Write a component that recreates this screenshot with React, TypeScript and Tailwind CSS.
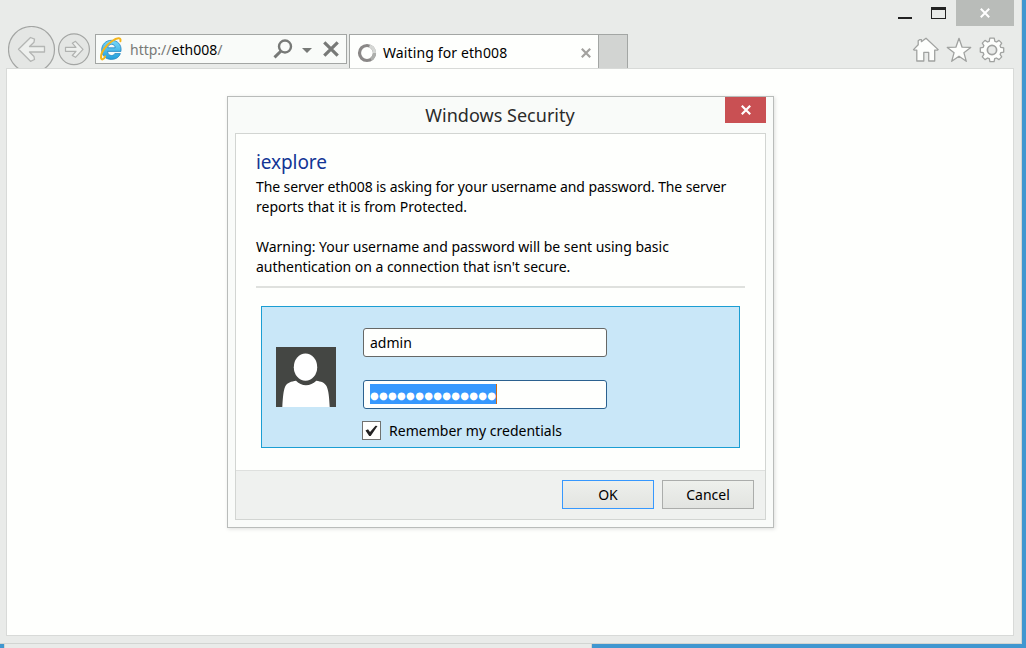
import React from 'react';

function BackIcon() {
  return (
    <svg width="48" height="42" viewBox="0 0 48 42" fill="none">
      <circle cx="23.5" cy="23.5" r="23" fill="#e4e6e4" stroke="#a3a5a3" strokeWidth="1.2" />
      <path d="M10.5 23.3 22.5 11.5 26.5 13.2 26 16.2 21.5 20.5H36.5V26H21.5L26 30.5 26.5 33.5 22.5 35.3Z" fill="#eef0ee" stroke="#b4b6b4" strokeWidth="1.3" strokeLinejoin="round" />
    </svg>
  );
}

function ForwardIcon() {
  return (
    <svg width="32" height="33" viewBox="0 0 32 33" fill="none">
      <circle cx="16" cy="16.3" r="15.4" fill="#e4e6e4" stroke="#a3a5a3" strokeWidth="1.2" />
      <path d="M25 16.4 17.5 24.3 14.3 22.5 18 18.3H7.5V14.3H18L14.3 10.2 17.5 8.3Z" fill="#eef0ee" stroke="#b0b2b0" strokeWidth="1.2" strokeLinejoin="round" />
    </svg>
  );
}

function ExplorerLogo() {
  return (
    <svg width="24" height="26" viewBox="0 0 24 26" fill="none">
      <defs>
        <linearGradient id="ie" x1="0" y1="0" x2="0" y2="1">
          <stop offset="0" stopColor="#78d8f8" />
          <stop offset="1" stopColor="#249fdb" />
        </linearGradient>
      </defs>
      <path fillRule="evenodd" d="M22 14.8C22.8 8.7 18.3 4.3 12.6 4.3 6.8 4.3 2.7 8.4 2.7 14 2.7 19.7 6.8 23.4 12.4 23.4 16.9 23.4 20 21.4 21.4 17.6H15.8C15 19 14 19.5 12.5 19.5 10.2 19.5 8.7 18 8.6 15.4H22ZM8.8 11.8C9.1 9.7 10.5 8.3 12.6 8.3 14.7 8.3 16 9.6 16.2 11.8Z" fill="url(#ie)" stroke="#2384c0" strokeWidth=".8" />
      <path d="M6.2 20.3C4.6 24 2.4 24.3 2 21.5 1.6 16.5 7 9 13.2 5 17.5 2.1 22.5 .8 21.4 5.2" stroke="#f4b51c" strokeWidth="2" strokeLinecap="round" />
    </svg>
  );
}

function HomeIcon() {
  return (
    <svg width="28" height="26" viewBox="0 0 28 26" fill="#fdfefc" stroke="#a0a2a0" strokeWidth="1.3" strokeLinejoin="round">
      <path d="M4.8 13.2H2.3L1.5 12.6 6.2 7.8V3.8L7.6 2.7H9.4V4.7L14 1.2 26.2 12.6 25.4 13.2H22.7V24H16.7V15.4H11.8V24H4.8Z" />
    </svg>
  );
}

function StarIcon() {
  return (
    <svg width="26" height="26" viewBox="0 0 26 26" fill="#fdfefc" stroke="#a0a2a0" strokeWidth="1.3" strokeLinejoin="round">
      <path d="M13 1.3 16.1 10.2 24.7 10.4 17.9 15.7 20.3 24.3 13 19.2 5.7 24.3 8.1 15.7 1.3 10.4 9.9 10.2Z" />
    </svg>
  );
}

function GearIcon() {
  return (
    <svg width="26" height="26" viewBox="0 0 26 26" fill="#fdfefc" stroke="#a0a2a0" strokeWidth="1.3" strokeLinejoin="round">
      <path d="M10.8 1.2H15.2L15.9 4.3 17.6 5 20 3.4 22.7 6.1 21.1 8.7 21.8 10.4 24.7 10.9V15.1L21.8 15.7 21.1 17.4 22.7 19.9 20 22.6 17.4 21 15.7 21.7 15.1 24.7H10.9L10.3 21.7 8.6 21 6 22.6 3.3 19.9 4.9 17.4 4.2 15.7 1.3 15.1V10.9L4.2 10.3 4.9 8.6 3.3 6.1 6 3.4 8.5 5 10.2 4.3Z" />
      <circle cx="13" cy="13" r="4.6" fill="#e9ebe9" strokeWidth="1.7" />
    </svg>
  );
}

function Cross({ size, width, color }: { size: number; width: number; color: string }) {
  return (
    <svg width={size} height={size} viewBox="0 0 10 10">
      <path d="M.8.8 9.2 9.2M9.2.8.8 9.2" stroke={color} strokeWidth={width} />
    </svg>
  );
}

function Avatar() {
  return (
    <svg width="60" height="60" viewBox="0 0 60 60">
      <path fill="#444643" d="M0 0H60V60H0Z" />
      <path fill="#fff" d="M6.3 60C6.8 50 7.5 43.5 9.2 39.5 11 35.7 15.5 34.5 20 33.8 23 36.8 26 38.2 30 38.2S37 36.8 40.3 33.8C45 34.5 48.7 35.6 50.6 39.2 52.6 43.5 53.2 50 53.7 60Z" />
      <ellipse cx="29.5" cy="20.2" rx="11.7" ry="13.6" fill="#fff" />
    </svg>
  );
}

function Toolbar() {
  return (
    <div className="flex h-[68px] w-[1014px] items-start">
      <div className="ml-2 mt-[26px] h-[42px] w-12 shrink-0"><BackIcon /></div>
      <div className="ml-0.5 mt-[33px] shrink-0"><ForwardIcon /></div>
      <div className="ml-[5px] mt-[34px] flex h-[30px] w-[252px] shrink-0 items-center border border-[#a3a6a4] bg-[#f9fbf9]">
        <div className="ml-[3px] w-6"><ExplorerLogo /></div>
        <span className="ml-[7px] w-[143px] text-[14px] text-[#777977]">http://<span className="text-black">eth008</span>/</span>
        <svg width="20" height="20" viewBox="0 0 20 20" fill="none" stroke="#777977">
          <circle cx="12" cy="7.5" r="6" strokeWidth="2.4" />
          <path d="M8 12 1.5 18.3" strokeWidth="3" />
        </svg>
        <svg className="ml-[9px] mt-0.5" width="10" height="5" viewBox="0 0 10 5"><path d="M0 0H10L5 5Z" fill="#777977" /></svg>
        <div className="ml-[11px]"><Cross size={16} width={2} color="#777977" /></div>
      </div>
      <div className="ml-0.5 mt-[34px] flex h-[34px] w-[250px] shrink-0 items-center border border-b-0 border-[#a3a6a4] bg-[#fefffd]">
        <svg className="ml-[7px] mt-0.5" width="20" height="20" viewBox="0 0 20 20" fill="none" strokeWidth="3.2">
          <circle cx="10" cy="10" r="7.5" stroke="#8a8887" />
          <path d="M12.5 2.9A7.5 7.5 0 0 1 17.5 10" stroke="#d5d7d4" />
          <path d="M17.5 10A7.5 7.5 0 0 1 14 16.3" stroke="#adafac" />
        </svg>
        <span className="ml-1.5 mt-0.5 flex-1 whitespace-nowrap text-[14px] tracking-[0.12px] text-black">Waiting for eth008</span>
        <div className="mr-[7px] mt-0.5"><Cross size={10} width={2.2} color="#a3a29f" /></div>
      </div>
      <div className="mt-[34px] h-[34px] w-[29px] shrink-0 border-r border-t border-[#a3a6a4] bg-[#d2d4d2]" />
      <div className="ml-auto flex h-[68px] w-[128px] flex-col">
        <div className="flex h-[26px] items-start">
          <div className="ml-[12px] mt-[17px] h-0.5 w-3.5 bg-[#222]" />
          <div className="ml-[19px] mt-[7px] h-3 w-[15px] border border-t-[3px] border-[#222]" />
          <div className="ml-[10px] flex h-[26px] w-[58px] items-center justify-center bg-[#b9bcb9]">
            <Cross size={10} width={2} color="#fff" />
          </div>
        </div>
        <div className="mt-[11px] flex pl-[26px]">
          <HomeIcon />
          <div className="ml-1.5"><StarIcon /></div>
          <div className="ml-[7px]"><GearIcon /></div>
        </div>
      </div>
    </div>
  );
}

function SecurityDialog() {
  return (
    <section className="absolute left-[220px] top-[27px] h-[432px] w-[547px] border border-[#b9bcba] bg-[#f9fbf9] px-[7px] shadow-[1px_1px_4px_rgba(0,0,0,0.13)]">
      <div className="flex h-9 items-start">
        <h1 className="ml-[40px] mt-1 flex-1 text-center text-[18px] leading-7 tracking-[0.02px] text-[#2b2b2b]">Windows Security</h1>
        <div className="flex h-[26px] w-[41px] items-center justify-center bg-[#c95053]">
          <Cross size={10} width={2.2} color="#fff" />
        </div>
      </div>
      <div className="flex h-[387px] w-[531px] flex-col border border-[#d2d5d2] bg-[#fefffd]">
        <div className="h-[336px] px-5 pt-4">
          <h2 className="text-[19px] leading-6 tracking-[-0.1px] text-[#123595]">iexplore</h2>
          <div className="mt-[3px] whitespace-nowrap text-[14px] leading-5 text-black">
            <p className="tracking-[-0.11px]">The server eth008 is asking for your username and password. The server</p>
            <p>reports that it is from Protected.</p>
            <p className="mt-5 tracking-[-0.02px]">Warning: Your username and password will be sent using basic</p>
            <p className="tracking-[-0.04px]">authentication on a connection that isn't secure.</p>
          </div>
          <div className="mt-[9px] h-0.5 w-[489px] bg-[#dfe1de]" />
          <div className="ml-[5px] mt-[18px] flex h-[142px] w-[479px] border border-[#1b9ed3] bg-[#c9e7f8]">
            <div className="ml-[14px] mt-10"><Avatar /></div>
            <div className="ml-[26px] pt-[21px]">
              <div className="ml-px flex h-[29px] w-[244px] items-center rounded-[3px] border border-[#666866] bg-[#fefffd] pl-1.5 text-[14px] text-black">admin</div>
              <div className="ml-px mt-[23px] flex h-[29px] w-[244px] items-start rounded-[3px] border border-[#2b618f] bg-[#fefffd] pl-1.5 pt-[3px]">
                <div className="flex h-5 w-[127px] items-center border-r border-[#cc6a14] bg-[#3698fe]">
                  <span className="mt-0.5 w-[126px] whitespace-nowrap font-['DejaVu_Sans'] text-[10px] tracking-[0.3px] text-white">●●●●●●●●●●●●●●</span>
                </div>
              </div>
              <div className="mt-3 flex h-[19px] items-center">
                <div className="flex h-[19px] w-[19px] items-center justify-center border border-[#707270] bg-[#fefffd]">
                  <svg width="13" height="12" viewBox="0 0 13 12"><path d="M.5 5.5 3 4.2 5 7 10.5.8 12.5 1 5.7 11H4.2Z" fill="#222" /></svg>
                </div>
                <span className="ml-2 text-[14px] tracking-[0.02px] text-black">Remember my credentials</span>
              </div>
            </div>
          </div>
        </div>
        <div className="flex flex-1 justify-end gap-2 border-t border-[#dee0de] bg-[#eff1ef] pr-[11px] pt-[9px]">
          <button className="h-[29px] w-[92px] border border-[#3698fe] bg-linear-to-b from-[#eef0ec] to-[#e2e4e1] text-[14px] text-black">OK</button>
          <button className="h-[29px] w-[92px] border border-[#abadab] bg-linear-to-b from-[#eef0ec] to-[#e2e4e1] text-[14px] text-black">Cancel</button>
        </div>
      </div>
    </section>
  );
}

export default function App() {
  return (
    <div className="h-[648px] w-[1026px] overflow-hidden bg-[#4097d0] font-['Noto_Sans',sans-serif]">
      <main className="h-[644px] w-[1022px] border-b border-r border-[#d2d5d2] bg-[#e9ebe9]">
        <Toolbar />
        <div className="relative ml-1.5 h-[568px] w-[1008px] border border-[#d8dad8] bg-[#fefffd]">
          <SecurityDialog />
        </div>
      </main>
      <div className="ml-1 h-1 w-[588px] border-x border-[#d2d5d2] bg-[#e9ebe9]" />
    </div>
  );
}
